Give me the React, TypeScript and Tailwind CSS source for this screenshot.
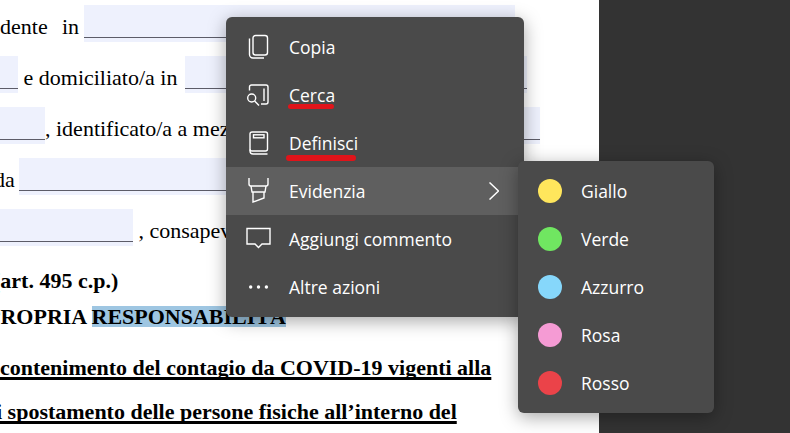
import type { ReactNode } from 'react'

function Field({ width }: { width: string }) {
  return (
    <div className={`h-[37px] shrink-0 bg-[#eef1fd] ${width}`}>
      <div className="h-[33px] border-b border-[#5c5c68]" />
    </div>
  )
}

function DocText({ children }: { children: ReactNode }) {
  return <span className="whitespace-pre leading-[44px]">{children}</span>
}

function Icon({ children }: { children: ReactNode }) {
  return (
    <svg
      viewBox="0 0 24 24"
      fill="none"
      stroke="currentColor"
      strokeWidth="1.4"
      className="h-6 w-6 shrink-0 overflow-visible text-white"
    >
      {children}
    </svg>
  )
}

const menuItems: { label: string; icon: ReactNode; active?: boolean }[] = [
  {
    label: 'Copia',
    icon: (
      <>
        <rect x="6" y="0.5" width="14.5" height="19.5" rx="2.5" />
        <path d="M2.5 3.5V19.5a3.5 3.5 0 0 0 3.5 3.5H17" />
      </>
    ),
  },
  {
    label: 'Cerca',
    icon: (
      <>
        <path d="M2.5 7.5V4a2 2 0 0 1 2-2H19a2 2 0 0 1 2 2V19a2 2 0 0 1-2 2H14" />
        <path d="M17 5.5V18" />
        <circle cx="4.7" cy="15" r="4" />
        <path d="M7.6 18L12 22.5" />
      </>
    ),
  },
  {
    label: 'Definisci',
    icon: (
      <>
        <rect x="3" y="1" width="17.5" height="19" rx="2" />
        <path d="M3 18.5V20a3 3 0 0 0 3 3H20.5" />
        <rect x="6.5" y="3.8" width="10.5" height="3" />
      </>
    ),
  },
  {
    label: 'Evidenzia',
    active: true,
    icon: (
      <>
        <path d="M2 -1V5a2 2 0 0 0 2 2H19a2 2 0 0 0 2-2V-1" />
        <path d="M4 7L5 13H18L19 7" />
        <path d="M6 13V23L17 19V13" />
      </>
    ),
  },
  {
    label: 'Aggiungi commento',
    icon: <path d="M0 1.5H23V17H15L11.5 20.5L8 17H0Z" />,
  },
  {
    label: 'Altre azioni',
    icon: (
      <>
        <circle cx="3.7" cy="12" r="1.7" fill="currentColor" stroke="none" />
        <circle cx="11.5" cy="12" r="1.7" fill="currentColor" stroke="none" />
        <circle cx="19.4" cy="12" r="1.7" fill="currentColor" stroke="none" />
      </>
    ),
  },
]

const colors = [
  { label: 'Giallo', dot: 'bg-[#ffe65c]' },
  { label: 'Verde', dot: 'bg-[#70e661]' },
  { label: 'Azzurro', dot: 'bg-[#86d7fb]' },
  { label: 'Rosa', dot: 'bg-[#f59bd4]' },
  { label: 'Rosso', dot: 'bg-[#eb4349]' },
]

function Document() {
  return (
    <div className="h-full w-[599px] shrink-0 overflow-hidden bg-white pt-[5px] font-['Liberation_Serif',serif] text-[22px] text-black">
      <div className="flex h-[51px] items-start [word-spacing:-0.75px]">
        <DocText>dente   in </DocText>
        <Field width="w-[431px]" />
      </div>
      <div className="flex h-[51px] items-start">
        <Field width="w-[18px]" />
        <DocText> e domiciliato/a in </DocText>
        <Field width="w-[342px] ml-[2px]" />
      </div>
      <div className="flex h-[51px] items-start">
        <Field width="w-[45px]" />
        <DocText>, identificato/a a mezzo </DocText>
        <Field width="w-[284px]" />
      </div>
      <div className="-ml-[6px] flex h-[51px] items-start">
        <DocText>da</DocText>
        <Field width="w-[400px] ml-[4px]" />
      </div>
      <div className="flex h-[51px] items-start">
        <Field width="w-[133px]" />
        <DocText> , consapevole</DocText>
      </div>
      <div className="-ml-[7px] whitespace-pre pt-[2px] font-bold leading-[37px]">(art. 495 c.p.)</div>
      <div className="-ml-[13px] h-[36px] whitespace-pre font-bold leading-[36px]">
        PROPRIA <span className="inline-block h-[21px] bg-[#9ec6e2] leading-[21px]">RESPONSABILITÀ</span>
      </div>
      <div className="whitespace-pre pt-[17px] font-bold leading-[32px] underline decoration-[3px] [text-decoration-skip-ink:none]">
        contenimento del contagio da COVID-19 vigenti alla
      </div>
      <div className="-ml-[4px] whitespace-pre pt-[12px] font-bold leading-[32px] underline decoration-[3px] [text-decoration-skip-ink:none]">
        i spostamento delle persone fisiche all’interno del
      </div>
    </div>
  )
}

function ContextMenu() {
  return (
    <div className="absolute left-[226px] top-[17px] w-[298px] rounded-md bg-[#4a4a4a] py-[6px] font-['Open_Sans',sans-serif] text-[17.5px] text-white shadow-[0_4px_18px_rgba(0,0,0,0.35)]">
      {menuItems.map((item) => (
        <div
          key={item.label}
          className={`flex h-12 items-center gap-[18px] pl-[21px] pr-[25px] ${
            item.active ? 'bg-[#5f5f5f]' : ''
          }`}
        >
          <Icon>{item.icon}</Icon>
          <span className="flex-1 whitespace-nowrap">{item.label}</span>
          {item.active && (
            <svg viewBox="0 0 10 18" fill="none" stroke="currentColor" strokeWidth="1.5" className="h-[18px] w-[10px]">
              <path d="M0.5 0.5L9.5 9L0.5 17.5" />
            </svg>
          )}
        </div>
      ))}
    </div>
  )
}

function ColorMenu() {
  return (
    <div className="absolute left-[518px] top-[161px] w-[196px] rounded-md bg-[#4a4a4a] py-[6px] font-['Open_Sans',sans-serif] text-[17.5px] text-white shadow-[0_4px_18px_rgba(0,0,0,0.35)]">
      {colors.map((color) => (
        <div key={color.label} className="flex h-12 items-center gap-[19px] pl-5">
          <span className={`h-6 w-6 rounded-full ${color.dot}`} />
          <span>{color.label}</span>
        </div>
      ))}
    </div>
  )
}

export default function App() {
  return (
    <div className="relative flex h-[433px] w-[790px] overflow-hidden bg-[#333333]">
      <Document />
      <ContextMenu />
      <ColorMenu />
      {/* red marks drawn on top of the screenshot */}
      <div className="absolute left-[288px] top-[104px] h-[5px] w-[46px] rounded-full bg-[#e0141a]" />
      <div className="absolute left-[286px] top-[155px] h-[6px] w-[70px] rounded-full bg-[#e0141a]" />
    </div>
  )
}
